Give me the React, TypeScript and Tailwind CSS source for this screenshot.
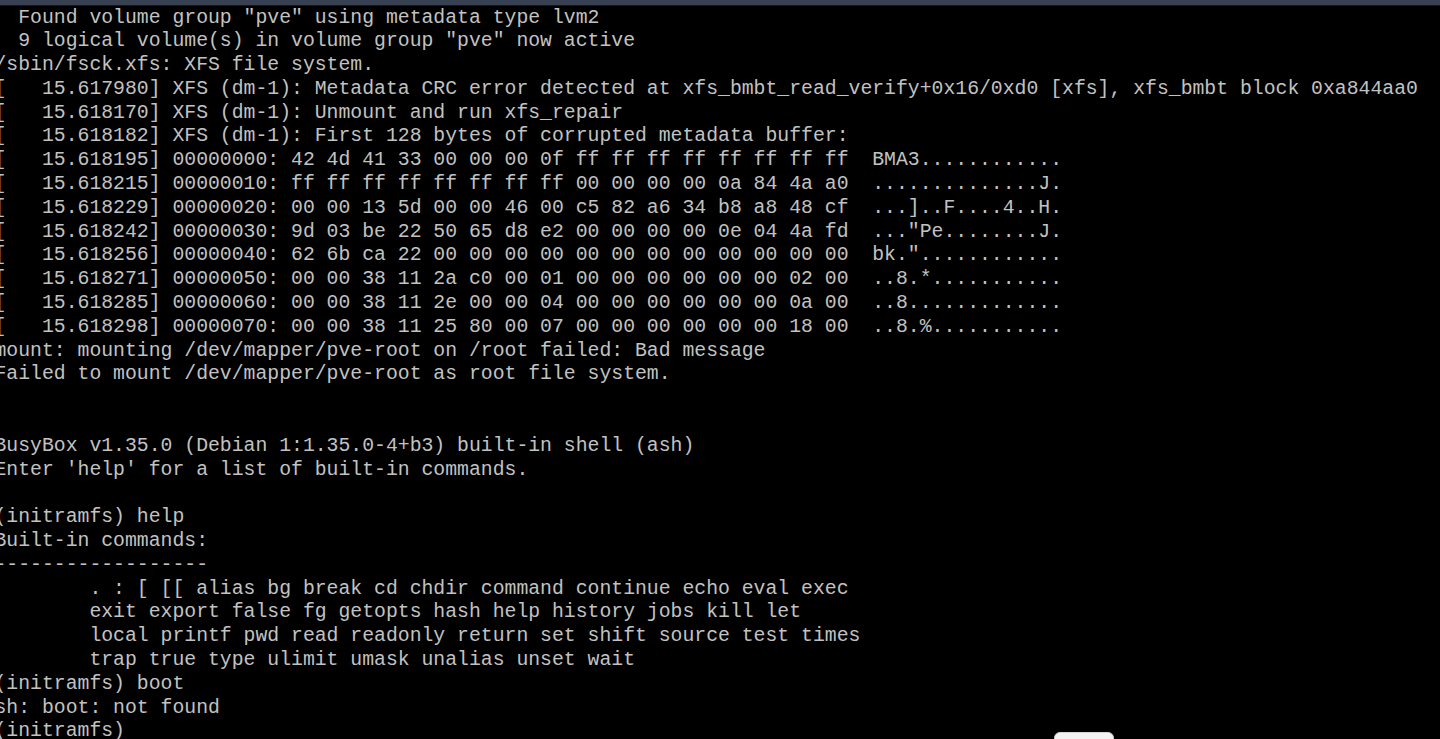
import React from "react";

const lines: string[] = [
  '  Found volume group "pve" using metadata type lvm2',
  '  9 logical volume(s) in volume group "pve" now active',
  "/sbin/fsck.xfs: XFS file system.",
  "[   15.617980] XFS (dm-1): Metadata CRC error detected at xfs_bmbt_read_verify+0x16/0xd0 [xfs], xfs_bmbt block 0xa844aa0",
  "[   15.618170] XFS (dm-1): Unmount and run xfs_repair",
  "[   15.618182] XFS (dm-1): First 128 bytes of corrupted metadata buffer:",
  "[   15.618195] 00000000: 42 4d 41 33 00 00 00 0f ff ff ff ff ff ff ff ff  BMA3............",
  "[   15.618215] 00000010: ff ff ff ff ff ff ff ff 00 00 00 00 0a 84 4a a0  ..............J.",
  "[   15.618229] 00000020: 00 00 13 5d 00 00 46 00 c5 82 a6 34 b8 a8 48 cf  ...]..F....4..H.",
  '[   15.618242] 00000030: 9d 03 be 22 50 65 d8 e2 00 00 00 00 0e 04 4a fd  ..."Pe........J.',
  '[   15.618256] 00000040: 62 6b ca 22 00 00 00 00 00 00 00 00 00 00 00 00  bk."............',
  "[   15.618271] 00000050: 00 00 38 11 2a c0 00 01 00 00 00 00 00 00 02 00  ..8.*...........",
  "[   15.618285] 00000060: 00 00 38 11 2e 00 00 04 00 00 00 00 00 00 0a 00  ..8.............",
  "[   15.618298] 00000070: 00 00 38 11 25 80 00 07 00 00 00 00 00 00 18 00  ..8.%...........",
  "mount: mounting /dev/mapper/pve-root on /root failed: Bad message",
  "Failed to mount /dev/mapper/pve-root as root file system.",
  "",
  "",
  "BusyBox v1.35.0 (Debian 1:1.35.0-4+b3) built-in shell (ash)",
  "Enter 'help' for a list of built-in commands.",
  "",
  "(initramfs) help",
  "Built-in commands:",
  "------------------",
  "        . : [ [[ alias bg break cd chdir command continue echo eval exec",
  "        exit export false fg getopts hash help history jobs kill let",
  "        local printf pwd read readonly return set shift source test times",
  "        trap true type ulimit umask unalias unset wait",
  "(initramfs) boot",
  "sh: boot: not found",
  "(initramfs) ",
];

export default function App() {
  return (
    <div className="relative flex h-[739px] w-[1440px] flex-col overflow-hidden bg-black">
      <div className="h-[5px] w-full shrink-0 bg-[#374151]" />
      <div className="h-[1px] w-full shrink-0 bg-[#15181c]" />
      <pre
        className="ml-[-5.5px] mt-[0.5px] whitespace-pre text-[19.78px] leading-[23.8px] text-[#c2c2c2]"
        style={{ fontFamily: '"Liberation Mono", "DejaVu Sans Mono", monospace' }}
      >
        {lines.map((l, i) => (
          <div key={i} className="h-[23.8px]">
            {l}
          </div>
        ))}
      </pre>
      <div className="absolute left-[1054px] top-[732px] h-[14px] w-[60px] rounded-t-[6px] border border-[#d4d4d4] bg-[#f3f3f3]" />
    </div>
  );
}
